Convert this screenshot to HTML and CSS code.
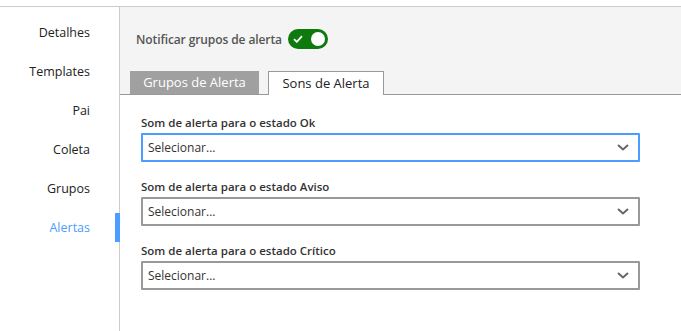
FILE: index.html
```html
<!DOCTYPE html>
<html lang="pt">
<head>
    <meta charset="UTF-8">
    <meta name="viewport" content="width=device-width, initial-scale=1.0">
    <title>Alertas</title>
    <link rel="stylesheet" href="styles.css">
</head>
<body>
    <div class="page">
        <nav class="sidebar">
            <a class="nav-item" href="#">Detalhes</a>
            <a class="nav-item" href="#">Templates</a>
            <a class="nav-item" href="#">Pai</a>
            <a class="nav-item" href="#">Coleta</a>
            <a class="nav-item" href="#">Grupos</a>
            <a class="nav-item active" href="#">Alertas</a>
        </nav>
        <main class="main">
            <div class="header">
                <div class="notify-row">
                    <span class="notify-label">Notificar grupos de alerta</span>
                    <span class="toggle">
                        <svg class="toggle-check" width="10" height="8" viewBox="0 0 10 8">
                            <path d="M1 4.2 L3.8 6.8 L9 1.2" fill="none" stroke="#fff" stroke-width="1.8"/>
                        </svg>
                        <span class="toggle-knob"></span>
                    </span>
                </div>
                <div class="tabs">
                    <div class="tab">Grupos de Alerta</div>
                    <div class="tab selected">Sons de Alerta</div>
                </div>
            </div>
            <div class="content">
                <div class="field">
                    <label class="field-label">Som de alerta para o estado Ok</label>
                    <div class="select focused">
                        <span>Selecionar...</span>
                        <svg class="chevron" width="12" height="7" viewBox="0 0 12 7">
                            <path d="M1 1 L6 5.5 L11 1" fill="none" stroke="#666" stroke-width="2"/>
                        </svg>
                    </div>
                </div>
                <div class="field">
                    <label class="field-label">Som de alerta para o estado Aviso</label>
                    <div class="select">
                        <span>Selecionar...</span>
                        <svg class="chevron" width="12" height="7" viewBox="0 0 12 7">
                            <path d="M1 1 L6 5.5 L11 1" fill="none" stroke="#666" stroke-width="2"/>
                        </svg>
                    </div>
                </div>
                <div class="field">
                    <label class="field-label">Som de alerta para o estado Crítico</label>
                    <div class="select">
                        <span>Selecionar...</span>
                        <svg class="chevron" width="12" height="7" viewBox="0 0 12 7">
                            <path d="M1 1 L6 5.5 L11 1" fill="none" stroke="#666" stroke-width="2"/>
                        </svg>
                    </div>
                </div>
            </div>
        </main>
    </div>
</body>
</html>
```

FILE: styles.css
```css
* {
    margin: 0;
    padding: 0;
    box-sizing: border-box;
}
body {
    font-family: 'Open Sans', 'Noto Sans', sans-serif;
    background: #fff;
    color: #222;
    overflow: hidden;
}
.page {
    display: flex;
    margin-top: 6px;
    border-top: 1px solid #ccc;
    height: 325px;
}
.sidebar {
    width: 120px;
    flex-shrink: 0;
    border-right: 1px solid #ccc;
    padding-top: 6px;
    display: flex;
    flex-direction: column;
}
.nav-item {
    position: relative;
    height: 39px;
    line-height: 39px;
    text-align: right;
    padding-right: 29px;
    font-size: 12.5px;
    color: #222;
    text-decoration: none;
}
.nav-item.active {
    color: #4d9cff;
}
.nav-item.active::after {
    content: '';
    position: absolute;
    right: -1px;
    top: 5px;
    width: 5px;
    height: 29px;
    background: #4d9cff;
}
.main {
    flex: 1;
    display: flex;
    flex-direction: column;
}
.header {
    height: 88px;
    background: #f4f4f4;
    border-bottom: 1px solid #999;
    display: flex;
    flex-direction: column;
}
.notify-row {
    display: flex;
    align-items: center;
    gap: 6px;
    padding-left: 16px;
    margin-top: 22px;
    height: 20px;
}
.notify-label {
    font-size: 12px;
    font-weight: 600;
    color: #555;
    letter-spacing: -0.1px;
}
.toggle {
    width: 40px;
    height: 20px;
    border-radius: 10px;
    background: #0e7a0e;
    display: flex;
    align-items: center;
    justify-content: space-between;
    padding: 0 3px 0 5px;
}
.toggle-knob {
    width: 14px;
    height: 14px;
    border-radius: 50%;
    background: #fff;
}
.tabs {
    margin-top: auto;
    display: flex;
    align-items: flex-end;
    gap: 9px;
    padding-left: 10px;
    margin-bottom: -1px;
}
.tab {
    height: 23px;
    line-height: 23px;
    width: 129px;
    text-align: center;
    font-size: 13px;
    color: #fff;
    background: #a0a0a0;
    margin-bottom: 1px;
}
.tab.selected {
    width: 116px;
    height: 24px;
    background: #fff;
    color: #222;
    border: 1px solid #999;
    border-bottom: none;
    margin-bottom: 0;
}
.content {
    padding: 20px 41px 0 21px;
    display: flex;
    flex-direction: column;
    gap: 17px;
}
.field {
    display: flex;
    flex-direction: column;
    gap: 2px;
}
.field-label {
    font-size: 11.5px;
    font-weight: 600;
    color: #333;
    line-height: 16px;
}
.select {
    height: 29px;
    border: 2px solid #999;
    border-radius: 1px;
    display: flex;
    align-items: center;
    justify-content: space-between;
    padding: 0 9px 0 5px;
    font-size: 12px;
    color: #333;
}
.select.focused {
    border-color: #4d9cff;
}
```
